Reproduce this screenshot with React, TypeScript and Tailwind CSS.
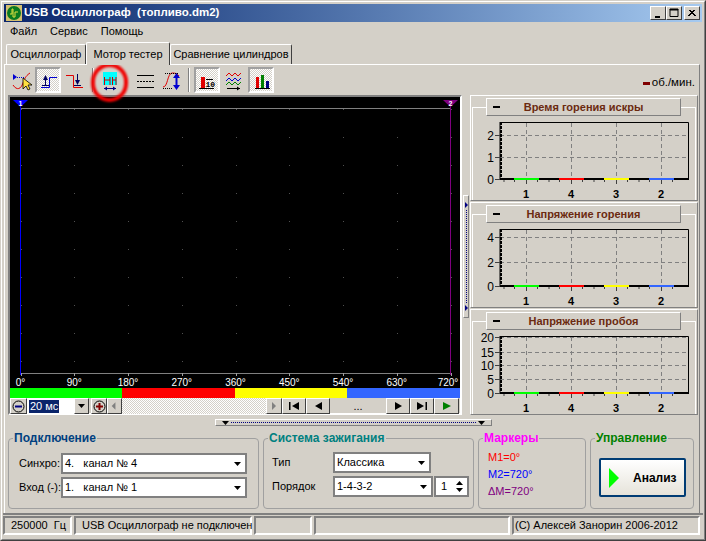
import React from 'react';

const raised = 'border border-t-white border-l-white border-r-[#404040] border-b-[#404040]';
const thin = 'border border-t-white border-l-white border-r-[#808080] border-b-[#808080]';
const sunken = 'border border-t-[#808080] border-l-[#808080] border-r-white border-b-white';
const dither = 'bg-[repeating-conic-gradient(#ffffff_0_25%,#d4d0c8_0_50%)] bg-size-[2px_2px]';
const comboBox = 'flex items-center bg-white border-2 border-t-[#808080] border-l-[#808080] border-r-[#808080] border-b-[#808080]';

const Arrow = ({ className = '' }: { className?: string }) => (
    <svg width="7" height="4" viewBox="0 0 7 4" className={className}><path d="M0 0h7L3.500 4z" fill="#000" /></svg>
);

const TitleButton = ({ children }: { children: React.ReactNode }) => (
    <div className="w-[16px] h-[14px] bg-[#d4d0c8] border border-t-white border-l-white border-r-[#404040] border-b-[#404040] flex items-center justify-center">
        <svg width="10" height="10" viewBox="0 0 10 10">{children}</svg>
    </div>
);

const ToolIcon = ({ pressed, width, children }: { pressed?: boolean; width: number; children: React.ReactNode }) => (
    <div className={pressed
        ? `w-[26px] h-[26px] flex items-center justify-center ${dither} border-2 border-t-[#a0a0a0] border-l-[#a0a0a0] border-r-white border-b-white`
        : 'h-[26px] flex items-center justify-center'}>
        <svg width={width} height="22" viewBox={`0 0 ${width} 22`}>{children}</svg>
    </div>
);

const Toolbar = () => (
    <div className="h-[30px] flex items-center pl-[6px] pr-[4px] relative">
        <div className="w-[22px] flex justify-center">
            <ToolIcon width={20}>
                <path d="M1 16C5 22 9 20 11 14S15 6 18 4" fill="none" stroke="#e00000" />
                <path d="M1 5l4 3-4 3z" fill="#0000d0" />
                <path d="M5 8.500h7" stroke="#0000d0" strokeDasharray="1 1" />
                <path d="M11 9v11l3-3 2 4 2-1-2-4h4z" fill="#ffe040" stroke="#000" strokeWidth="0.8" />
            </ToolIcon>
        </div>
        <div className="ml-[2px]">
            <ToolIcon pressed width={20}>
                <path d="M3 18.500h8.500V8.500H19" fill="none" stroke="#0000d0" />
                <path d="M7.500 8v8M4 16.500h7" stroke="#000060" />
                <path d="M5 11l2.500-5 2.500 5z" fill="#000060" />
            </ToolIcon>
        </div>
        <div className="ml-[5px]">
            <ToolIcon width={18}>
                <path d="M0 6.500h7.500v12H17" fill="none" stroke="#e00000" />
                <path d="M11.500 5v8M8 16.500h7" stroke="#000060" />
                <path d="M9 11h5l-2.500 5z" fill="#000060" />
            </ToolIcon>
        </div>
        <div className="w-[2px] h-[24px] ml-[8px] border-l border-l-[#808080] border-r border-r-white" />
        <div className="ml-[9px]">
            <ToolIcon width={14}>
                <rect x="0" y="3" width="14" height="13" fill="#00ffff" />
                <path d="M1.500 8v8M1.500 11H7M7 8v8M9.500 8v8M9.500 11H13M13 8v8" stroke="#d00000" fill="none" />
                <path d="M1 19.500h12" stroke="#000080" />
                <path d="M1 19.500l3-2v4zM13 19.500l-3-2v4z" fill="#000080" />
            </ToolIcon>
        </div>
        <div className="ml-[18px]">
            <ToolIcon width={20}>
                <path d="M2 6.500h17M2 18.500h17" stroke="#000" />
                <path d="M2 12.500h17" stroke="#000" strokeDasharray="2 1" />
            </ToolIcon>
        </div>
        <div className="ml-[7px]">
            <ToolIcon width={20}>
                <path d="M1 18c5 0 4-13 9-14 2 0 5 0 7 3" fill="none" stroke="#e00000" />
                <path d="M3 4.500h13M1 19.500h10" stroke="#000" strokeDasharray="1 1" />
                <path d="M14.500 6v13" stroke="#0000d0" strokeWidth="2" />
                <path d="M11 9l3.500-5L18 9zM11 16h7l-3.500 5z" fill="#0000d0" />
            </ToolIcon>
        </div>
        <div className="w-[2px] h-[24px] ml-[6px] border-l border-l-[#808080] border-r border-r-white" />
        <div className="ml-[4px]">
            <ToolIcon pressed width={18}>
                <rect x="3" y="8" width="4" height="11" fill="#e00000" />
                <path d="M1 19.500h15M8 10.500h7" stroke="#000" />
                <text x="7.500" y="18" fontSize="8" fontWeight="700" fontFamily="Liberation Mono, monospace" fill="#000">10</text>
            </ToolIcon>
        </div>
        <div className="ml-[5px]">
            <ToolIcon width={18}>
                <path d="M1 7l3-3 3 3 3-3 3 3 3-3" fill="none" stroke="#e00000" />
                <path d="M1 12l3-3 3 3 3-3 3 3 3-3" fill="none" stroke="#0000d0" />
                <path d="M1 16l3-3 3 3 3-3 3 3 3-3" fill="none" stroke="#008000" />
                <path d="M2 19.500h13" stroke="#000" />
                <path d="M15 19.500l-3-2v4z" fill="#000" />
            </ToolIcon>
        </div>
        <div className="ml-[5px]">
            <ToolIcon pressed width={18}>
                <rect x="4" y="8" width="3" height="11" fill="#e00000" />
                <rect x="9" y="6" width="3" height="13" fill="#008000" />
                <rect x="14" y="12" width="3" height="7" fill="#000080" />
                <path d="M3 19.500h15" stroke="#000" />
            </ToolIcon>
        </div>
        <div className="ml-auto mt-[6px] flex items-center gap-[2px]">
            <div className="w-[7px] h-[3px] bg-[#800000]" />
            <span className="text-[11.5px] text-black">об./мин.</span>
        </div>
    </div>
);

const scopeLabels = ['0°', '90°', '180°', '270°', '360°', '450°', '540°', '630°', '720°'];

const ScopeView = () => (
    <svg width="450" height="291" viewBox="0 0 450 291" className="block bg-black">
        <path d="M10 11.500H441" stroke="#808080" />
        <path d="M10 276.500H441" stroke="#808080" />
        {scopeLabels.map((label, i) => {
            const x = 10.5 + i * 53.75;
            return (
                <g key={label}>
                    <path d={`M${Math.round(x) + 0.5} 12V276`} stroke="#505050" strokeDasharray="1 27" />
                    <path d={`M${Math.round(x) + 0.5} 276V279`} stroke="#a0a0a0" />
                    <text x={Math.min(x, 438)} y="289" textAnchor="middle" fontSize="10" fill="#fff" fontFamily="Liberation Sans, sans-serif">{label}</text>
                </g>
            );
        })}
        <path d="M10.500 4V278" stroke="#0000ff" />
        <path d="M440.500 4V278" stroke="#800080" />
        <path d="M3 3h15l-7.500 7z" fill="#0000ff" />
        <text x="10.500" y="9" fontSize="7" fontWeight="700" textAnchor="middle" fill="#fff" fontFamily="Liberation Sans, sans-serif">1</text>
        <path d="M433 3h15l-7.500 7z" fill="#800080" />
        <text x="440.500" y="9" fontSize="7" fontWeight="700" textAnchor="middle" fill="#fff" fontFamily="Liberation Sans, sans-serif">2</text>
    </svg>
);

const NavButton = ({ width, children }: { width: number; children: React.ReactNode }) => (
    <div className={`h-[16px] flex items-center justify-center bg-[#d4d0c8] ${raised}`} style={{ width }}>
        <svg width="14" height="10" viewBox="0 0 14 10">{children}</svg>
    </div>
);

const ScopeControls = () => (
    <div className="h-[16px] flex items-stretch">
        <div className={`w-[17px] flex items-center justify-center ${raised}`}>
            <svg width="13" height="13" viewBox="0 0 13 13">
                <circle cx="6.500" cy="6.500" r="5.500" fill="#d4d0c8" stroke="#000" />
                <path d="M3 6.500h7" stroke="#000080" strokeWidth="2" />
            </svg>
        </div>
        <div className="w-[62px] bg-white flex items-center pl-[2px]">
            <span className="bg-[#0a246a] text-white text-[11px] leading-[13px] px-[1px]">20 мс</span>
            <div className={`ml-auto w-[15px] h-full flex items-center justify-center bg-[#d4d0c8] ${raised}`}><Arrow /></div>
        </div>
        <div className={`w-[16px] ml-[2px] flex items-center justify-center ${raised}`}>
            <svg width="13" height="13" viewBox="0 0 13 13">
                <circle cx="6.500" cy="6.500" r="5.500" fill="#d4d0c8" stroke="#000" />
                <path d="M3 6.500h7M6.500 3v7" stroke="#800000" strokeWidth="2" />
            </svg>
        </div>
        <NavButton width={15}><path d="M8 1v8L4 5z" fill="#808080" /></NavButton>
        <div className={`w-[144px] ${dither}`} />
        <NavButton width={16}><path d="M5 1v8l4-4z" fill="#808080" /></NavButton>
        <NavButton width={24}><path d="M2 1h1.500v8H2zM12 1v8L5 5z" fill="#000" /></NavButton>
        <NavButton width={24}><path d="M11 1v8L4 5z" fill="#000" /></NavButton>
        <div className="w-[56px] flex items-center justify-center text-[11px] leading-none">...</div>
        <NavButton width={24}><path d="M4 1v8l7-4z" fill="#000" /></NavButton>
        <NavButton width={24}><path d="M2 1v8l7-4zM10.500 1H12v8h-1.500z" fill="#000" /></NavButton>
        <NavButton width={25}><path d="M3 1v8l8-4z" fill="#008000" /></NavButton>
    </div>
);

const cylinders = [
    { label: '1', x: 55, color: '#00ff00' },
    { label: '4', x: 100, color: '#ff0000' },
    { label: '3', x: 145, color: '#ffff00' },
    { label: '2', x: 190, color: '#3366ff' },
];

const BarChart = ({ ticks }: { ticks: { label: string; y: number }[] }) => (
    <svg width="226" height="84" viewBox="0 0 226 84" className="block">
        {ticks.filter(t => t.y < 57).map(t => (
            <path key={t.label} d={`M29 ${t.y + 7.5}H217`} stroke="#808080" strokeDasharray="4 3" />
        ))}
        {cylinders.map(c => (
            <path key={c.label} d={`M${c.x + 0.5} 8V64`} stroke="#808080" strokeDasharray="4 3" />
        ))}
        <path d="M29.500 7.500H217.500V64M29 7V65" fill="none" stroke="#000" />
        <path d="M30 7V65" stroke="#000" strokeWidth="2" strokeDasharray="3 1" />
        <path d="M29 64H218" stroke="#000" strokeWidth="2" />
        {cylinders.map(c => (
            <g key={c.label}>
                <path d={`M${c.x - 12} 64H${c.x + 13}`} stroke={c.color} strokeWidth="2" />
                <path d={`M${c.x + 0.5} 65V69M${c.x - 22} 65V67M${c.x - 11.5} 65V67M${c.x + 11.5} 65V67`} stroke="#404040" />
                <text x={c.x} y="83" textAnchor="middle" fontSize="11" fontWeight="700" fill="#000" fontFamily="Liberation Sans, sans-serif">{c.label}</text>
            </g>
        ))}
        {ticks.map(t => (
            <g key={t.label}>
                <path d={`M24 ${t.y + 7.5}h5`} stroke="#404040" />
                <text x="23" y={t.y + 12} textAnchor="end" fontSize="12" fill="#000" fontFamily="Liberation Sans, sans-serif">{t.label}</text>
            </g>
        ))}
    </svg>
);

const ChartPanel = ({ title, ticks }: { title: string; ticks: { label: string; y: number }[] }) => (
    <div className={`h-[106px] w-[228px] pt-[2px] ${thin}`}>
        <div className="relative z-10 h-[18px] ml-[15px] mr-[16px] flex items-center bg-[#d4d0c8] border border-t-white border-l-white border-r-[#808080] border-b-[#808080]">
            <div className="w-[7px] h-[2px] bg-black ml-[6px]" />
            <div className="flex-1 text-center pr-[13px] text-[11px] font-bold text-[#6b2a10] leading-none">{title}</div>
        </div>
        <div className="-mt-[9px] mx-[1px] h-[93px] border border-t-white border-l-white border-r-white border-b-0 pt-[7px]">
            <div className="-ml-[2px]">
                <BarChart ticks={ticks} />
            </div>
        </div>
    </div>
);

const GroupBox = ({ title, titleColor, width, children }: { title: string; titleColor: string; width: number; children: React.ReactNode }) => (
    <div className="h-[71px] relative rounded-[4px] border border-[#a0a0a0]" style={{ width }}>
        <span className={`absolute -top-[9px] left-[4px] px-[1px] bg-[#d4d0c8] text-[12px] leading-[16px] font-bold whitespace-nowrap ${titleColor}`}>{title}</span>
        {children}
    </div>
);

const Combo = ({ width, value }: { width: number; value: string }) => (
    <div className={`${comboBox} h-[21px] pl-[2px] pr-[4px]`} style={{ width }}>
        <span className="text-[11px] leading-none whitespace-pre">{value}</span>
        <Arrow className="ml-auto" />
    </div>
);

const Connection = () => (
    <GroupBox title="Подключение" titleColor="text-[#004080]" width={251}>
        <div className="flex flex-col gap-[3px] pt-[14px] pl-[10px]">
            <div className="flex items-center h-[21px]">
                <span className="w-[42px] text-[11px]">Синхро:</span>
                <Combo width={186} value="4.   канал № 4" />
            </div>
            <div className="flex items-center h-[21px]">
                <span className="w-[42px] text-[11px] whitespace-nowrap">Вход (-):</span>
                <Combo width={186} value="1.   канал № 1" />
            </div>
        </div>
    </GroupBox>
);

const Ignition = () => (
    <GroupBox title="Система зажигания" titleColor="text-[#008080]" width={211}>
        <div className="flex flex-col gap-[3px] pt-[13px] pl-[8px]">
            <div className="flex items-center h-[21px]">
                <span className="w-[61px] text-[11px]">Тип</span>
                <Combo width={98} value="Классика" />
            </div>
            <div className="flex items-center h-[21px]">
                <span className="w-[61px] text-[11px]">Порядок</span>
                <Combo width={100} value="1-4-3-2" />
                <div className={`${comboBox} ml-[1px] w-[35px] h-[21px] pl-[5px] pr-[4px] text-[11px]`}>
                    1
                    <div className="ml-auto flex flex-col gap-[3px]">
                        <Arrow className="rotate-180" />
                        <Arrow />
                    </div>
                </div>
            </div>
        </div>
    </GroupBox>
);

const Markers = () => (
    <GroupBox title="Маркеры" titleColor="text-[#ff00ff]" width={108}>
        <div className="flex flex-col pt-[10px] pl-[9px] text-[11px] leading-[17px]">
            <span className="text-[#ff0000]">M1=0°</span>
            <span className="text-[#0000ff]">M2=720°</span>
            <span className="text-[#800080]">ΔM=720°</span>
        </div>
    </GroupBox>
);

const Control = () => (
    <GroupBox title="Управление" titleColor="text-[#008000]" width={104}>
        <div className="pt-[19px] pl-[8px]">
            <div className="w-[87px] h-[39px] flex items-center rounded-[2px] border-2 border-[#003c74] bg-linear-to-b from-white to-[#e6e3da] pl-[8px]">
                <svg width="10" height="20" viewBox="0 0 10 20"><path d="M0 0l10 10L0 20z" fill="#00ff00" /></svg>
                <span className="ml-[14px] text-[12px] font-bold leading-none">Анализ</span>
            </div>
        </div>
    </GroupBox>
);

const statusCells = [
    { width: 69, text: '250000  Гц', cls: 'justify-end pr-[4px]' },
    { width: 178, text: 'USB Осциллограф не подключен', cls: 'pl-[6px]' },
    { width: 58, text: '', cls: '' },
    { width: 196, text: '', cls: '' },
    { width: 188, text: '(C) Алексей Занорин 2006-2012', cls: 'pl-[1px]' },
];

const App: React.FC = () => {
    return (
        <div className="w-[706px] h-[541px] overflow-hidden bg-[#d4d0c8] text-black font-['Liberation_Sans',sans-serif] border border-t-[#d4d0c8] border-l-[#d4d0c8] border-r-[#404040] border-b-[#404040]">
            <div className="h-full border border-t-white border-l-white border-r-[#808080] border-b-[#808080] p-[2px] flex flex-col relative">
                <div className="h-[18px] shrink-0 flex items-center bg-linear-to-r from-[#0a246a] to-[#a6caf0] pl-[2px] pr-[2px]">
                    <svg width="16" height="16" viewBox="0 0 16 16" className="shrink-0">
                        <rect x="0" y="0" width="16" height="16" fill="#d4c070" />
                        <circle cx="8" cy="8" r="7" fill="#0a7a20" />
                        <path d="M4 9h2V4h1v8h2V7h3" fill="none" stroke="#e0e040" />
                    </svg>
                    <span className="ml-[2px] text-white font-bold text-[11.5px] leading-none whitespace-pre">USB Осциллограф  (топливо.dm2)</span>
                    <div className="ml-auto flex">
                        <TitleButton><path d="M2 8h5v2H2z" fill="#000" /></TitleButton>
                        <TitleButton><path d="M1 1.500h8v7H1zM1 1h8v1H1z" fill="none" stroke="#000" /></TitleButton>
                        <div className="ml-[2px]">
                            <TitleButton><path d="M2 2l6 6M8 2L2 8M3 2l6 6M7 2L1 8" stroke="#000" /></TitleButton>
                        </div>
                    </div>
                </div>
                <div className="h-[19px] shrink-0 flex items-center gap-[13px] pl-[6px] text-[11px]">
                    <span>Файл</span>
                    <span>Сервис</span>
                    <span>Помощь</span>
                </div>
                <div className="h-[23px] shrink-0 flex items-end pl-[2px] text-[11px] whitespace-nowrap">
                    <div className="w-[80px] h-[20px] flex items-center justify-center rounded-t-[2px] border border-b-0 border-t-white border-l-white border-r-[#404040]">Осциллограф</div>
                    <div className="relative z-10 -mb-[1px] w-[84px] h-[23px] flex items-center justify-center bg-[#d4d0c8] rounded-t-[2px] border border-b-0 border-t-white border-l-white border-r-[#404040]">Мотор тестер</div>
                    <div className="w-[122px] h-[20px] flex items-center justify-center rounded-t-[2px] border border-b-0 border-t-white border-l-white border-r-[#404040]">Сравнение цилиндров</div>
                </div>
                <div className="w-[696px] h-[450px] shrink-0 border border-t-white border-l-white border-r-[#808080] border-b-0 relative">
                    <Toolbar />
                    <div className="flex items-start pl-[3px]">
                        <div className={`w-[454px] h-[320px] ${sunken} border-2`}>
                            <ScopeView />
                            <div className="flex h-[10px]">
                                <div className="w-[112px] bg-[#00ff00]" />
                                <div className="w-[113px] bg-[#ff0000]" />
                                <div className="w-[112px] bg-[#ffff00]" />
                                <div className="w-[113px] bg-[#3366ff]" />
                            </div>
                            <ScopeControls />
                        </div>
                        <div className={`ml-[1px] mt-[100px] w-[6px] h-[123px] flex flex-col items-center justify-between py-[6px] ${thin}`}>
                            <svg width="3" height="6" viewBox="0 0 3 6"><path d="M0 0l3 3-3 3z" fill="#000080" /></svg>
                            <div className="flex-1 w-0 border-l border-dotted border-[#000080] my-[2px]" />
                            <svg width="3" height="6" viewBox="0 0 3 6"><path d="M0 0l3 3-3 3z" fill="#000080" /></svg>
                        </div>
                        <div className="ml-[1px] flex flex-col gap-[1px]">
                            <ChartPanel title="Время горения искры" ticks={[{ label: '2', y: 13 }, { label: '1', y: 35 }, { label: '0', y: 57 }]} />
                            <ChartPanel title="Напряжение горения" ticks={[{ label: '4', y: 8 }, { label: '2', y: 33 }, { label: '0', y: 57 }]} />
                            <ChartPanel title="Напряжение пробоя" ticks={[{ label: '20', y: 1 }, { label: '15', y: 16 }, { label: '10', y: 29 }, { label: '5', y: 43 }, { label: '0', y: 57 }]} />
                        </div>
                    </div>
                    <div className={`ml-[210px] mt-[4px] w-[277px] h-[7px] flex items-center px-[6px] ${thin}`}>
                        <Arrow />
                        <div className="flex-1 border-t border-dotted border-[#000080] mx-[2px]" />
                        <Arrow />
                    </div>
                    <div className="flex gap-[4px] pl-[3px] mt-[12px]">
                        <Connection />
                        <Ignition />
                        <Markers />
                        <Control />
                    </div>
                    {/* red highlight around the toolbar button */}
                    <div className="absolute left-[86px] top-[-2px] w-[37px] h-[39px] rounded-full border-[4px] border-[#f00000] blur-[1px]" />
                </div>
                <div className="absolute left-[1px] right-[1px] bottom-[3px] h-[23px] border-t-2 border-t-[#808080] pt-[1px] flex gap-[2px] text-[11px]">
                    {statusCells.map((cell, i) => (
                        <div key={i} className={`h-[19px] flex items-center whitespace-pre ${sunken} border-2 ${cell.cls}`} style={{ width: cell.width }}>{cell.text}</div>
                    ))}
                </div>
            </div>
        </div>
    );
};

export default App;
